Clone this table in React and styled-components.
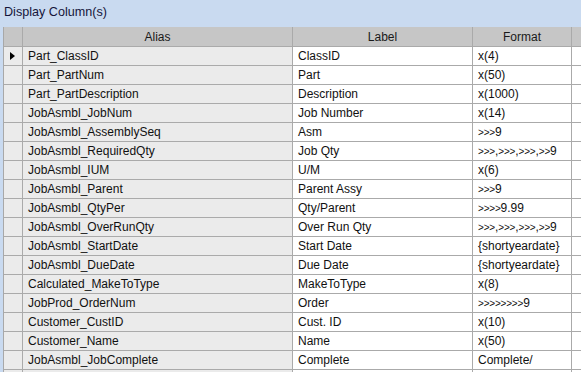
import React from 'react'
import styled, { createGlobalStyle } from 'styled-components'

const GlobalStyle = createGlobalStyle`
  html, body {
    margin: 0;
    padding: 0;
    background: #c9daf0;
    overflow: hidden;
  }
`

const Panel = styled.div`
  width: 581px;
  height: 372px;
  background: #c9daf0;
  font-family: "Liberation Sans", Arial, sans-serif;
  overflow: hidden;
`

const TitleBar = styled.div`
  height: 27px;
  display: flex;
  align-items: center;
  padding-left: 4px;
  font-size: 12.6px;
  color: #15153a;
  box-sizing: border-box;
  padding-bottom: 3px;
`

const Grid = styled.div`
  margin-left: 3px;
  display: grid;
  grid-template-columns: 19px 270px 180px 99px 40px;
  border-left: 1px solid #a8a8a8;
  width: 640px;
`

const HeadCell = styled.div`
  height: 20px;
  box-sizing: border-box;
  background: #c6c6c6;
  border-right: 1px solid #aaaaaa;
  border-bottom: 1px solid #aaaaaa;
  font-size: 12px;
  color: #1a1a1a;
  display: flex;
  align-items: center;
  justify-content: center;
`

const Cell = styled.div`
  height: 19px;
  box-sizing: border-box;
  background: ${p => (p.readonly ? '#ebebeb' : '#ffffff')};
  border-right: 1px solid #aaaaaa;
  border-bottom: 1px solid #aaaaaa;
  font-size: 12px;
  color: #111;
  display: flex;
  align-items: center;
  padding-left: 5px;
  white-space: pre;
  overflow: hidden;
`

const RowHead = styled(Cell)`
  background: #ebebeb;
  padding-left: 6px;
`

const Arrow = styled.span`
  width: 0;
  height: 0;
  border-top: 4px solid transparent;
  border-bottom: 4px solid transparent;
  border-left: 5px solid #000;
`

const Gt = styled.span`
  font-size: 10px;
  letter-spacing: -0.2px;
`

const rows = [
  ['Part_ClassID', 'ClassID', 'x(4)'],
  ['Part_PartNum', 'Part', 'x(50)'],
  ['Part_PartDescription', 'Description', 'x(1000)'],
  ['JobAsmbl_JobNum', 'Job Number', 'x(14)'],
  ['JobAsmbl_AssemblySeq', 'Asm', '>>>9'],
  ['JobAsmbl_RequiredQty', 'Job Qty', '>>>,>>>,>>>,>>9'],
  ['JobAsmbl_IUM', 'U/M', 'x(6)'],
  ['JobAsmbl_Parent', 'Parent Assy', '>>>9'],
  ['JobAsmbl_QtyPer', 'Qty/Parent', '>>>>9.99'],
  ['JobAsmbl_OverRunQty', 'Over Run Qty', '>>>,>>>,>>>,>>9'],
  ['JobAsmbl_StartDate', 'Start Date', '{shortyeardate}'],
  ['JobAsmbl_DueDate', 'Due Date', '{shortyeardate}'],
  ['Calculated_MakeToType', 'MakeToType', 'x(8)'],
  ['JobProd_OrderNum', 'Order', '>>>>>>>>9'],
  ['Customer_CustID', 'Cust. ID', 'x(10)'],
  ['Customer_Name', 'Name', 'x(50)'],
  ['JobAsmbl_JobComplete', 'Complete', 'Complete/'],
  ['', '', ''],
]

// '>' glyphs in the original grid font are narrow, so shrink them
function Format({ text }) {
  return text.split(/(>+)/).map((part, i) =>
    part.startsWith('>') ? <Gt key={i}>{part}</Gt> : <span key={i}>{part}</span>
  )
}

export default function App() {
  return (
    <Panel>
      <GlobalStyle />
      <TitleBar>Display Column(s)</TitleBar>
      <Grid>
        <HeadCell />
        <HeadCell>Alias</HeadCell>
        <HeadCell>Label</HeadCell>
        <HeadCell>Format</HeadCell>
        <HeadCell />
        {rows.map((r, i) => (
          <React.Fragment key={i}>
            <RowHead>{i === 0 && <Arrow />}</RowHead>
            <Cell readonly>{r[0]}</Cell>
            <Cell>{r[1]}</Cell>
            <Cell><Format text={r[2]} /></Cell>
            <Cell />
          </React.Fragment>
        ))}
      </Grid>
    </Panel>
  )
}
